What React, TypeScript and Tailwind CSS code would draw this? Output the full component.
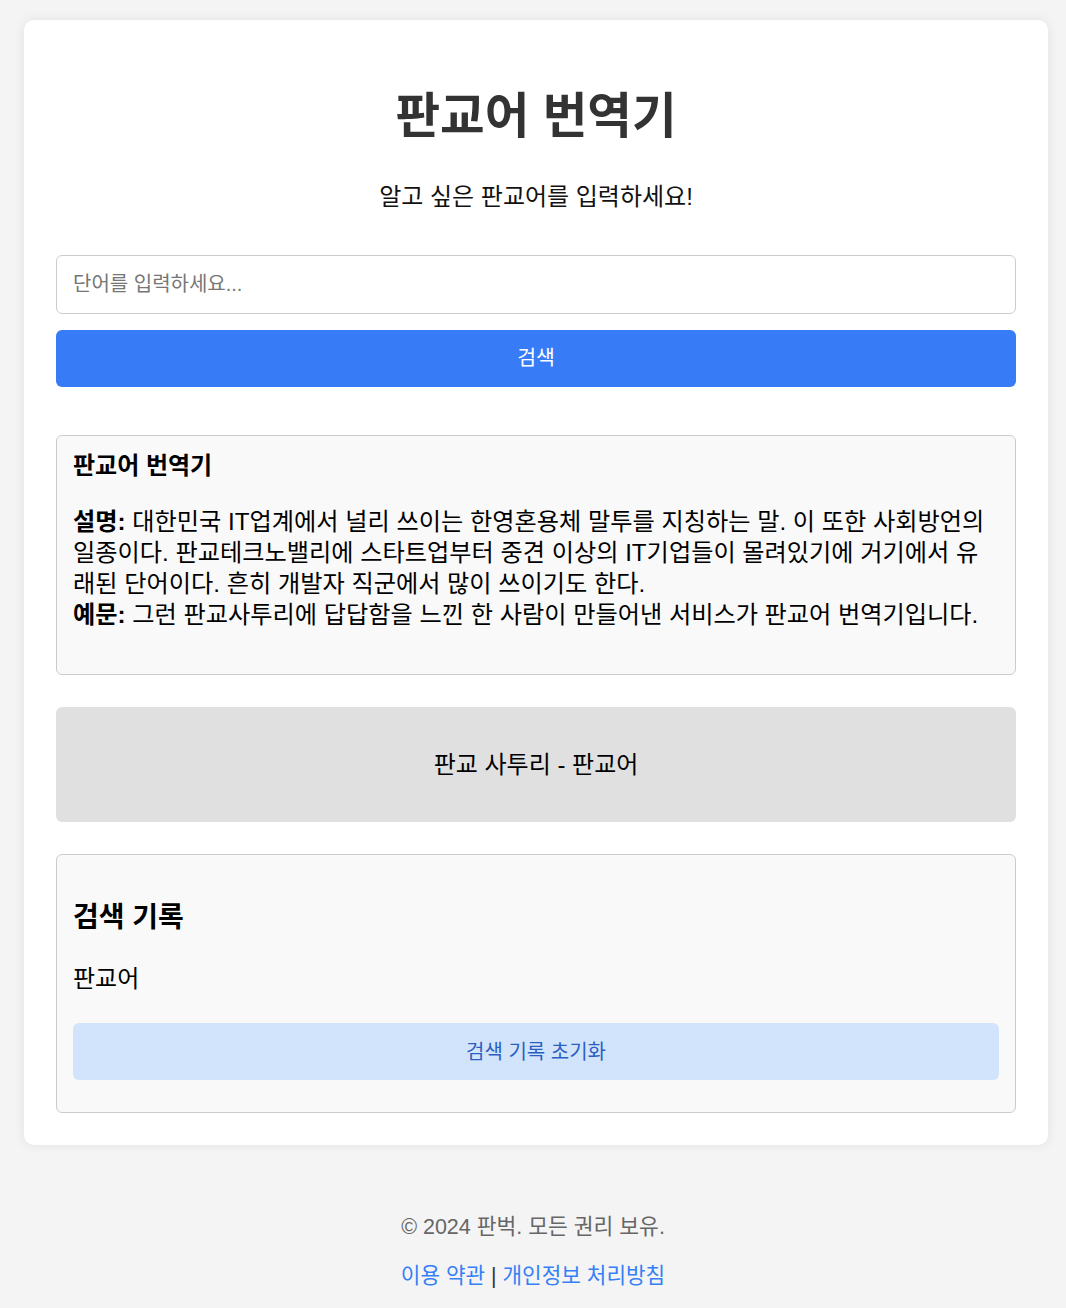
import React, { useState } from 'react';

export default function App() {
  const [word, setWord] = useState('');

  return (
    <div className="min-h-screen bg-[#f4f4f4] pt-5 pb-4 font-['Liberation_Sans','Noto_Sans_CJK_KR',sans-serif] text-[#111]">
      {/* Main card */}
      <div className="ml-6 w-[1024px] rounded-[10px] bg-white px-8 pt-8 pb-8 shadow-[0_0_12px_rgba(0,0,0,0.08)]">
        <h1 className="mt-[39px] text-center text-[48.5px] font-bold leading-[50px] text-[#333]">판교어 번역기</h1>
        <p className="mt-[42px] text-center text-[24px] leading-[28px] text-[#111]">알고 싶은 판교어를 입력하세요!</p>

        <input
          value={word}
          onChange={(e) => setWord(e.target.value)}
          placeholder="단어를 입력하세요..."
          className="mt-[44px] block h-[59px] w-full rounded-[6px] border border-[#cccccc] px-4 text-[20px] placeholder:text-[#767676] outline-none"
        />
        <button className="mt-4 block h-[57px] w-full rounded-[6px] bg-[#377bf6] text-[20.5px] text-white">검색</button>

        {/* Info box */}
        <div className="mt-12 rounded-[6px] border border-[#cccccc] bg-[#f9f9f9] px-4 pt-4 pb-[44px]">
          <h2 className="text-[24px] font-bold leading-[28px] text-black">판교어 번역기</h2>
          <p className="mt-[26px] text-[24.2px] leading-[31px] text-black">
            <strong className="font-bold">설명:</strong> 대한민국 IT업계에서 널리 쓰이는 한영혼용체 말투를 지칭하는 말. 이 또한 사회방언의 일종이다. 판교테크노밸리에 스타트업부터 중견 이상의 IT기업들이 몰려있기에 거기에서 유래된 단어이다. 흔히 개발자 직군에서 많이 쓰이기도 한다.
            <br />
            <strong className="font-bold">예문:</strong> 그런 판교사투리에 답답함을 느낀 한 사람이 만들어낸 서비스가 판교어 번역기입니다.
          </p>
        </div>

        {/* Result */}
        <div className="mt-8 flex h-[115px] items-center justify-center rounded-[6px] bg-[#e0e0e0] text-[24px] text-black">
          판교 사투리 - 판교어
        </div>

        {/* History */}
        <div className="mt-8 rounded-[6px] border border-[#cccccc] bg-[#f9f9f9] px-4 pt-4 pb-8">
          <h3 className="mt-[30px] text-[28px] font-bold leading-[34px] text-black">검색 기록</h3>
          <div className="mt-[29px] text-[24px] leading-[30px] text-black">판교어</div>
          <button className="mt-[29px] block h-[57px] w-full rounded-[6px] bg-[#d2e4fb] text-[20px] text-[#2a5fc2]">검색 기록 초기화</button>
        </div>
      </div>

      {/* Footer */}
      <footer className="mt-[68px] text-center text-[21.5px] leading-[28px]">
        <p className="text-[#666]">© 2024 판벅. 모든 권리 보유.</p>
        <p className="mt-[21px] text-[21.3px] text-[#333]">
          <a href="#" className="text-[#3580f6]">이용 약관</a> | <a href="#" className="text-[#3580f6]">개인정보 처리방침</a>
        </p>
      </footer>
    </div>
  );
}
